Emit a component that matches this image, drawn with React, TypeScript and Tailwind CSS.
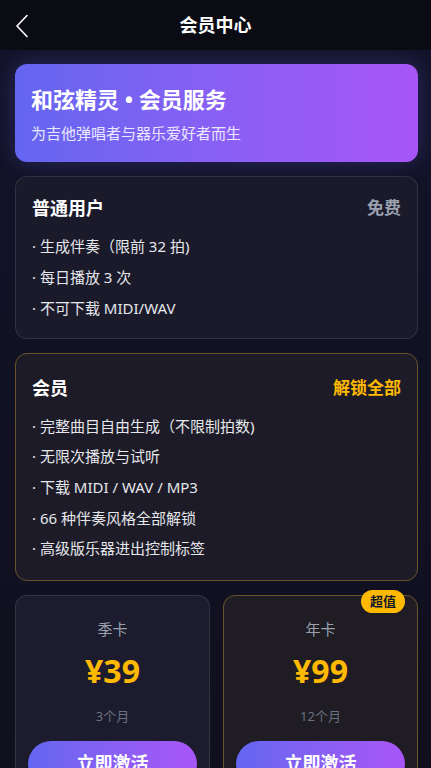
const font = { fontFamily: '"Noto Sans", "Noto Sans CJK SC", sans-serif' }

const freeItems = ['生成伴奏（限前 32 拍)', '每日播放 3 次', '不可下载 MIDI/WAV']
const vipItems = [
  '完整曲目自由生成（不限制拍数)',
  '无限次播放与试听',
  '下载 MIDI / WAV / MP3',
  '66 种伴奏风格全部解锁',
  '高级版乐器进出控制标签',
]

const plans = [
  { name: '季卡', price: '¥39', period: '3个月', best: false },
  { name: '年卡', price: '¥99', period: '12个月', best: true },
]

export default function App() {
  return (
    <div className="min-h-screen bg-[#11111f] text-white" style={font}>
      <header className="relative flex h-[50px] items-center justify-center bg-[#0b0b14]">
        <button className="absolute left-[15px] top-[14px] text-white">
          <svg width="14" height="24" viewBox="0 0 14 24" fill="none" stroke="currentColor" strokeWidth="1.6" strokeLinecap="round" strokeLinejoin="round">
            <polyline points="12,1.5 2,12 12,22.5" />
          </svg>
        </button>
        <h1 className="text-[18px] font-bold">会员中心</h1>
      </header>

      <main className="flex flex-col gap-[14px] bg-gradient-to-b from-[#13132a] to-[#0f0f1c] pl-[15px] pr-[13px] pt-[14px]">
        <section className="rounded-xl bg-gradient-to-r from-[#6366f1] to-[#a855f7] px-4 pb-[17px] pt-[21px] shadow-[0_0_22px_rgba(99,102,241,0.28)]">
          <h2 className="text-[22px] font-bold leading-7">和弦精灵 • 会员服务</h2>
          <p className="mt-[9px] text-[15px] text-white/85">为吉他弹唱者与器乐爱好者而生</p>
        </section>

        <section className="rounded-xl border border-white/10 bg-[#1a1a2b] px-4 pb-[14px] pt-[18px]">
          <div className="flex items-center justify-between">
            <h3 className="text-[18px] font-bold">普通用户</h3>
            <span className="text-[17px] font-bold text-gray-400">免费</span>
          </div>
          <ul className="mt-[9px] flex flex-col">
            {freeItems.map(item => (
              <li key={item} className="h-[31px] text-[15px] leading-[31px] text-gray-200">
                · {item}
              </li>
            ))}
          </ul>
        </section>

        <section className="rounded-xl border border-[#6b5528] bg-[#1d1b28] px-4 pb-[16px] pt-[21px]">
          <div className="flex items-center justify-between">
            <h3 className="text-[18px] font-bold">会员</h3>
            <span className="text-[17px] font-bold text-amber-400">解锁全部</span>
          </div>
          <ul className="mt-[9px] flex flex-col">
            {vipItems.map(item => (
              <li key={item} className="h-[30.7px] text-[15px] leading-[30.7px] text-gray-200">
                · {item}
              </li>
            ))}
          </ul>
        </section>

        <div className="grid grid-cols-2 gap-[13px] pb-6">
          {plans.map(plan => (
            <div
              key={plan.name}
              className={`relative flex flex-col items-center rounded-xl border px-3 pb-4 pt-[22px] ${
                plan.best ? 'border-[#6b5528] bg-[#1f1c24]' : 'border-white/10 bg-[#1c1c2e]'
              }`}
            >
              {plan.best && (
                <span className="absolute -top-[6px] right-3 rounded-full bg-amber-400 px-[9px] py-[2px] text-[13px] font-bold text-gray-900">
                  超值
                </span>
              )}
              <span className="text-[15px] text-gray-400">{plan.name}</span>
              <span className="mt-[11px] text-[32px] font-bold leading-10 text-amber-400">{plan.price}</span>
              <span className="mt-[16px] text-[13px] text-gray-500">{plan.period}</span>
              <button className="mt-[14px] h-[46px] w-full rounded-full bg-gradient-to-r from-[#6366f1] to-[#a855f7] text-[18px] font-bold">
                立即激活
              </button>
            </div>
          ))}
        </div>
      </main>
    </div>
  )
}
